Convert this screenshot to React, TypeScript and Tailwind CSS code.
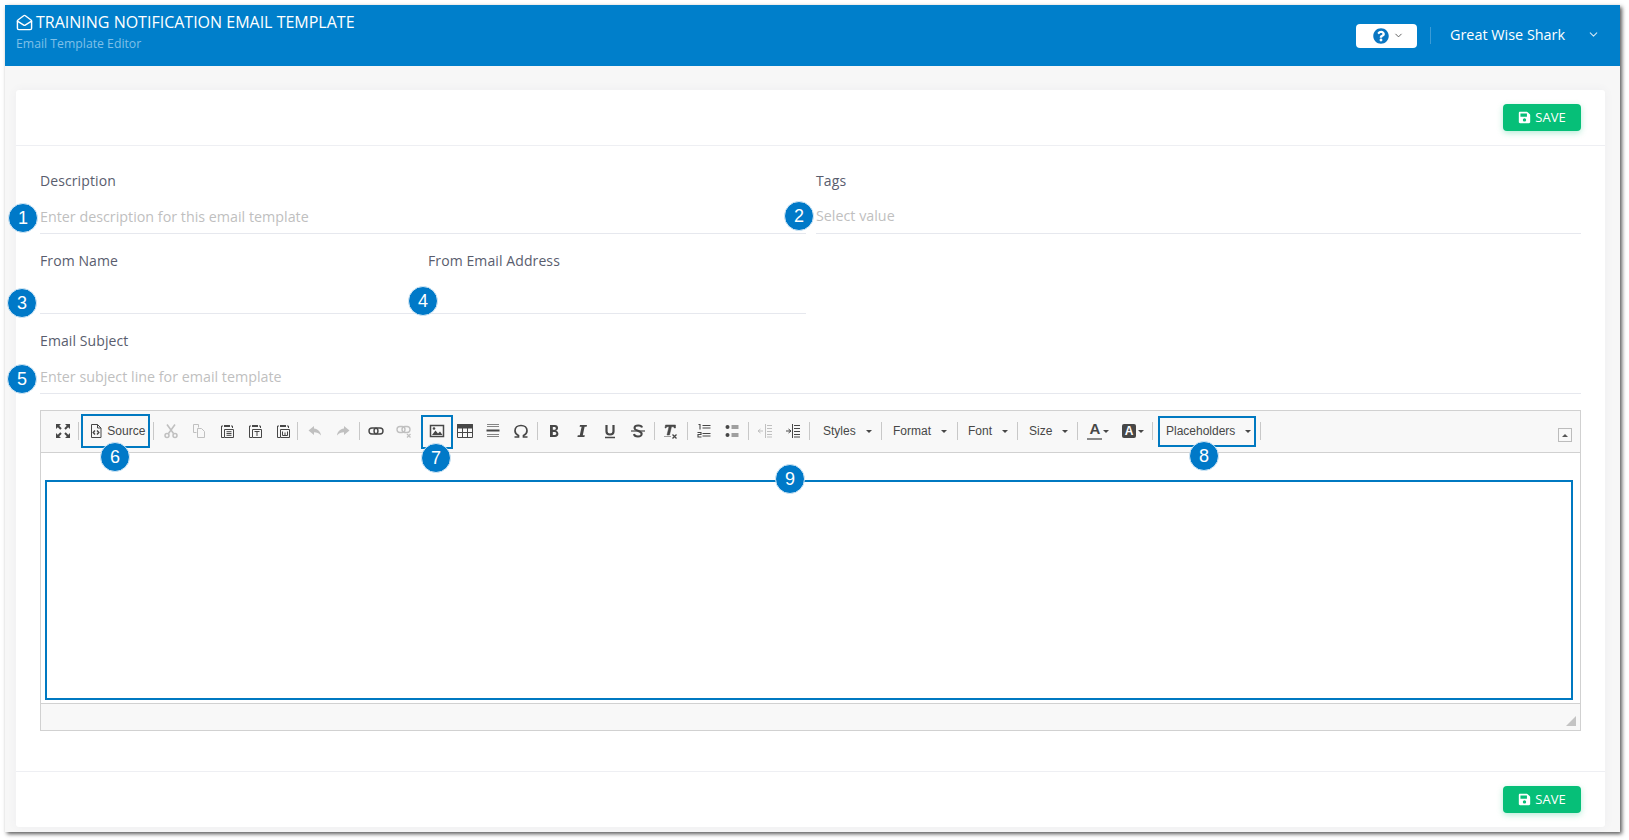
import { ChevronDown, MailOpen } from 'lucide-react';
import { FaQuestionCircle, FaSave } from 'react-icons/fa';
import type { ReactNode } from 'react';

const sans = "font-['Open_Sans',sans-serif]";
const arial = "font-['Liberation_Sans',Arial,sans-serif]";

function SaveButton() {
  return (
    <button
      type="button"
      className="flex h-[27px] w-[78px] items-center justify-center gap-[4px] rounded-[4px] bg-[#06bf78] text-[13px] text-white shadow-[0_2px_6px_rgba(6,191,120,0.3)]"
    >
      <FaSave className="h-[13px] w-[13px]" />
      SAVE
    </button>
  );
}

function Field({ label, placeholder, tight = false }: { label: string; placeholder?: string; tight?: boolean }) {
  return (
    <div>
      <div className="mb-[9px] h-[20px] text-[14px] leading-[20px] tracking-[0.1px] text-[#595d6e]">{label}</div>
      <div
        className={`h-[34px] border-b border-[#e6e8ee] text-[14.3px] text-[#bfbfbf] ${tight ? 'leading-[31px]' : 'leading-[33px]'}`}
      >
        {placeholder}
      </div>
    </div>
  );
}

function Ico({ children, off = false }: { children: ReactNode; off?: boolean }) {
  return (
    <div className="flex h-[28px] w-[28px] shrink-0 items-center justify-center">
      <svg viewBox="0 0 16 16" className={`h-[16px] w-[16px] ${off ? 'text-[#c0c0c0]' : 'text-[#474747]'}`} fill="none" stroke="currentColor">
        {children}
      </svg>
    </div>
  );
}

function Sep({ className = '' }: { className?: string }) {
  return <div className={`h-[18px] w-px shrink-0 bg-[#c8c8c8] ${className}`} />;
}

function Caret({ className = '' }: { className?: string }) {
  return <span className={`inline-block h-0 w-0 border-x-[3px] border-t-[3px] border-x-transparent border-t-[#474747] ${className}`} />;
}

function ComboRow({ label, w, pl, gap }: { label: string; w: number; pl: number; gap: number }) {
  return (
    <div className="flex h-[28px] shrink-0 items-center text-[12px] text-[#474747]" style={{ width: w, paddingLeft: pl }}>
      <span style={{ marginRight: gap }}>{label}</span>
      <Caret />
    </div>
  );
}

function Badge({ n, x, y }: { n: number; x: number; y: number }) {
  return (
    <div
      className={`absolute flex h-[30px] w-[30px] items-center justify-center rounded-full border border-[#d6e9f6] bg-[#0079c8] text-[18px] text-white ${arial}`}
      style={{ left: x - 15, top: y - 15 }}
    >
      {n}
    </div>
  );
}

function Box({ x, y, w, h }: { x: number; y: number; w: number; h: number }) {
  return <div className="absolute border-2 border-[#0079c1]" style={{ left: x, top: y, width: w, height: h }} />;
}

function Toolbar() {
  return (
    <div className={`flex h-[42px] items-center border-b border-[#d1d1d1] bg-[#f8f8f8] pb-[1px] pl-[8px] ${arial}`}>
      <Ico>
        <path d="M2 2l4 4M14 2l-4 4M2 14l4-4M14 14l-4-4" strokeWidth="2" />
        <path d="M1 1h5L1 6zM15 1h-5l5 5zM1 15h5l-5-5zM15 15h-5l5-5z" fill="currentColor" stroke="none" />
      </Ico>
      <Sep className="ml-[1.300px]" />
      <div className="flex h-[28px] w-[74px] shrink-0 items-center pl-[9px] text-[12px] text-[#474747]">
        <svg viewBox="0 0 16 16" className="mr-[3px] h-[16px] w-[16px] text-[#474747]" fill="none" stroke="currentColor">
          <path d="M3.500 1.500h6l3.500 3.500v9.500h-9.500zM9.500 1.500v3.500h3.500" />
          <path d="M7 7.500L5.200 9.500 7 11.500M9 7.500l1.800 2L9 11.500" strokeWidth="1.400" />
        </svg>
        Source
      </div>
      <Sep className="mr-[3px]" />
      <Ico off>
        <path d="M4 1.500l6.500 9M12 1.500l-6.500 9" strokeWidth="1.600" />
        <circle cx="4" cy="12.500" r="2" strokeWidth="1.500" />
        <circle cx="12" cy="12.500" r="2" strokeWidth="1.500" />
      </Ico>
      <Ico off>
        <path d="M2.500 1.500h5v3M2.500 1.500v8h3M6.500 5.500h4l3 3v6h-7z" />
      </Ico>
      <Ico>
        <path d="M4 3H2.500v11.500H5M12 3h1.500v2" />
        <path d="M5 2h6v2H5z" fill="currentColor" stroke="none" />
        <path d="M5.500 6.500h9v8h-9zM7.500 8.700h5M7.500 10.500h5M7.500 12.300h5" />
      </Ico>
      <Ico>
        <path d="M4 3H2.500v11.500H5M12 3h1.500v2" />
        <path d="M5 2h6v2H5z" fill="currentColor" stroke="none" />
        <path d="M5.500 6.500h9v8h-9zM7.500 8.500h5M10 8.500v4.500" />
      </Ico>
      <Ico>
        <path d="M4 3H2.500v11.500H5M12 3h1.500v2" />
        <path d="M5 2h6v2H5z" fill="currentColor" stroke="none" />
        <path d="M5.500 6.500h9v8h-9zM7.500 8.500v4h5v-4M10 9.500v3" />
      </Ico>
      <Sep className="mr-[2.700px]" />
      <Ico off>
        <path d="M7 3L1.500 7.500 7 12V9.300c3 0 5 .7 7 3.200-.5-4-3-6.500-7-7z" fill="currentColor" stroke="none" />
      </Ico>
      <Ico off>
        <path d="M9 3l5.500 4.500L9 12V9.300c-3 0-5 .7-7 3.200.5-4 3-6.500 7-7z" fill="currentColor" stroke="none" />
      </Ico>
      <Sep className="ml-[2px] mr-[2px]" />
      <Ico>
        <rect x="1" y="5" width="9" height="6" rx="3" strokeWidth="1.400" />
        <rect x="6" y="5" width="9" height="6" rx="3" strokeWidth="1.400" />
      </Ico>
      <Ico off>
        <rect x="1" y="3.500" width="8" height="6" rx="3" strokeWidth="1.400" />
        <rect x="6" y="3.500" width="8" height="6" rx="3" strokeWidth="1.400" />
        <path d="M11 11l3.500 3.500M14.500 11L11 14.500" strokeWidth="1.300" />
      </Ico>
      <Sep className="ml-[3px] mr-px" />
      <Ico>
        <path d="M1.500 2.500h13v11h-13z" strokeWidth="1.500" />
        <path d="M3 12l3.500-4.500L9 10.500l2-2 2.500 3.500z" fill="currentColor" stroke="none" />
        <circle cx="5" cy="5.500" r="1.300" fill="currentColor" stroke="none" />
      </Ico>
      <Ico>
        <path d="M.500 1.500h15v13H.500z" />
        <path d="M.500 1.500h15v3.500H.500z" fill="currentColor" />
        <path d="M.500 9.500h15M5.500 5v9.500M10.500 5v9.500" />
      </Ico>
      <Ico>
        <path d="M2 1.500h12M2 3.500h12M2 11.500h12M2 13.500h12" opacity="0.65" />
        <path d="M1.500 7.500h13" strokeWidth="2" />
      </Ico>
      <Ico>
        <path d="M1.500 14h4v-1.500C3 11.500 2 9.700 2 7.800 2 4.700 4.500 2.500 8 2.500s6 2.200 6 5.300c0 1.900-1 3.700-3.500 4.700V14h4" strokeWidth="1.700" />
      </Ico>
      <Sep className="ml-[2px] mr-[2px]" />
      <Ico>
        <path d="M4 2h5c4 0 4 5.500.5 5.700C13.500 8 13.500 14 9 14H4zM6.800 4v2.800H8.500c1.800 0 1.800-2.800 0-2.800zM6.800 9v3h2c2 0 2-3 0-3z" fill="currentColor" fillRule="evenodd" stroke="none" />
      </Ico>
      <Ico>
        <path d="M6 2h7l-.4 1.800h-2L8.800 12.200h2l-.4 1.800h-7l.4-1.800h2L7.600 3.800h-2z" fill="currentColor" stroke="none" />
      </Ico>
      <Ico>
        <path d="M4.500 2v6.500c0 4 7 4 7 0V2" strokeWidth="2.200" />
        <path d="M3 14.500h10" strokeWidth="1.500" />
      </Ico>
      <Ico>
        <path d="M12 4.500C11.500 1.800 4.800 1.700 4.500 4.800 4.200 8 12 7.500 11.700 11 11.400 14.300 4.500 14.200 4 11" strokeWidth="2" />
        <path d="M1 8h14" strokeWidth="1.200" />
      </Ico>
      <Sep className="ml-[2px] mr-px" />
      <Ico>
        <path d="M3.500 2h10v3h-1.300l-.4-1.300H9.500L7.500 12h-2.500L7 3.700H4.800L4 5H3zM2 13.500h7" fill="currentColor" stroke="currentColor" strokeWidth="0.500" />
        <path d="M10.500 11.500l4 4M14.500 11.500l-4 4" strokeWidth="1.300" />
      </Ico>
      <Sep className="ml-[3px] mr-[2px]" />
      <Ico>
        <path d="M6.500 2.500h8M6.500 5h8M6.500 10.500h8M6.500 13h8" strokeWidth="1.200" />
        <path d="M2.500 1.500h1.500v5M1.500 9.500h3.500v2h-3v2.500h3.500" strokeWidth="1.100" />
      </Ico>
      <Ico>
        <circle cx="3.500" cy="4" r="2" fill="currentColor" stroke="none" />
        <circle cx="3.500" cy="12" r="2" fill="currentColor" stroke="none" />
        <path d="M7.500 3h7M7.500 5h7M7.500 11h7M7.500 13h7" strokeWidth="1.200" />
      </Ico>
      <Sep className="ml-[2px] mr-[2px]" />
      <Ico off>
        <path d="M8.500 1v14M10 2.500h5M10 5.500h5M10 8.500h5M10 11.500h5M10 14h5M1 8h5M3.500 6L1 8l2.500 2" />
      </Ico>
      <Ico>
        <path d="M7.500 1v14M9 2.500h6M9 5.500h6M9 8.500h6M9 11.500h6M9 14h6M1 8h5M3.500 6L6 8l-2.500 2" />
      </Ico>
      <Sep className="ml-[2px]" />
      <ComboRow label="Styles" w={71} pl={13} gap={10} />
      <Sep />
      <ComboRow label="Format" w={75} pl={11} gap={10} />
      <Sep />
      <ComboRow label="Font" w={59} pl={10} gap={10} />
      <Sep />
      <ComboRow label="Size" w={59} pl={11} gap={10} />
      <Sep />
      <div className="flex h-[28px] w-[38px] shrink-0 items-center pl-[9.500px]">
        <div className="flex w-[15px] flex-col items-center">
          <span className="text-[15px] font-bold leading-[14px] text-[#474747]">A</span>
          <span className="mt-[2px] h-[2px] w-[15px] bg-[#888]" />
        </div>
        <Caret className="ml-[1px]" />
      </div>
      <div className="flex h-[28px] w-[36px] shrink-0 items-center pl-[6px]">
        <span className="flex h-[14px] w-[14px] items-center justify-center rounded-[2px] bg-[#474747] text-[12px] font-bold text-white">A</span>
        <Caret className="ml-[2px]" />
      </div>
      <Sep />
      <ComboRow label="Placeholders" w={107} pl={13} gap={10} />
      <Sep />
    </div>
  );
}

export default function App() {
  return (
    <div className={`relative h-[840px] w-[1629px] overflow-hidden bg-white pl-[5px] pt-[5px] ${sans}`}>
      <div className="flex h-[827px] w-[1615px] flex-col bg-[#f7f7f7] shadow-[2px_2px_4px_rgba(0,0,0,0.65)]">
        <header className="flex h-[61px] shrink-0 items-center justify-between bg-[#007fcb] pl-[11px] pr-[20px] text-white">
          <div className="-mt-[8px]">
            <div className="flex items-center gap-[3px] text-[16px] leading-[24px]">
              <MailOpen className="h-[17px] w-[17px]" strokeWidth={2} />
              TRAINING NOTIFICATION EMAIL TEMPLATE
            </div>
            <div className="mt-[1px] text-[12.250px] leading-[18px] text-[#7fc0e8]">Email Template Editor</div>
          </div>
          <div className="flex items-center">
            <button type="button" className="flex h-[24px] w-[61px] items-center justify-center gap-[4px] rounded-[4px] bg-white pl-[4px]">
              <FaQuestionCircle className="h-[16px] w-[16px] text-[#0a76c2]" />
              <ChevronDown className="h-[11px] w-[11px] text-[#555]" />
            </button>
            <div className="ml-[13px] h-[17px] w-px bg-[#3c9bd6]" />
            <div className="-mt-[2px] ml-[19px] w-[115px] whitespace-nowrap text-[14.400px] font-medium">Great Wise Shark</div>
            <ChevronDown className="-mt-[2px] ml-[22px] h-[13px] w-[13px] text-[#cfe6f5]" />
          </div>
        </header>
        <main className="flex-1 px-[11px] pt-[24px]">
          <div className="flex h-[737px] w-[1589px] flex-col rounded-[3px] bg-white shadow-[0_0_10px_rgba(80,80,120,0.06)]">
            <div className="flex h-[56px] shrink-0 items-center justify-end border-b border-[#eeeff3] pr-[24px]">
              <SaveButton />
            </div>
            <div className="flex-1 px-[24px] pt-[25px]">
              <div className="flex flex-col gap-[17px]">
                <div className="grid grid-cols-[766px_765px] gap-x-[10px]">
                  <Field label="Description" placeholder="Enter description for this email template" />
                  <Field label="Tags" placeholder="Select value" tight />
                </div>
                <div className="grid w-[766px] grid-cols-[388px_378px]">
                  <Field label="From Name" />
                  <Field label="From Email Address" />
                </div>
                <Field label="Email Subject" placeholder="Enter subject line for email template" />
              </div>
              <div className="mt-[16px] flex h-[321px] w-[1541px] flex-col border border-[#d1d1d1]">
                <Toolbar />
                <div className="flex-1 bg-white" />
                <div className="relative h-[27px] shrink-0 border-t border-[#d1d1d1] bg-[#f8f8f8]">
                  <div className="absolute bottom-[4px] right-[4px] h-0 w-0 border-b-[10px] border-l-[10px] border-b-[#c4c4c4] border-l-transparent" />
                </div>
              </div>
            </div>
            <div className="flex h-[56px] shrink-0 items-center justify-end border-t border-[#eeeff3] pr-[24px]">
              <SaveButton />
            </div>
          </div>
        </main>
      </div>

      <div className="absolute left-[1558px] top-[428px] flex h-[14px] w-[14px] items-center justify-center border border-[#bcbcbc] bg-[#f8f8f8]">
        <span className="h-0 w-0 border-x-[3px] border-b-[3px] border-x-transparent border-b-[#555]" />
      </div>

      <Box x={81} y={414} w={69} h={34} />
      <Box x={421} y={415} w={32} h={34} />
      <Box x={1158} y={416} w={98} h={31} />
      <Box x={45} y={480} w={1528} h={220} />

      <Badge n={1} x={23} y={218} />
      <Badge n={2} x={799} y={216} />
      <Badge n={3} x={22} y={303} />
      <Badge n={4} x={423} y={301} />
      <Badge n={5} x={22} y={379} />
      <Badge n={6} x={115} y={457} />
      <Badge n={7} x={436} y={458} />
      <Badge n={8} x={1204} y={456} />
      <Badge n={9} x={790} y={479} />
    </div>
  );
}
